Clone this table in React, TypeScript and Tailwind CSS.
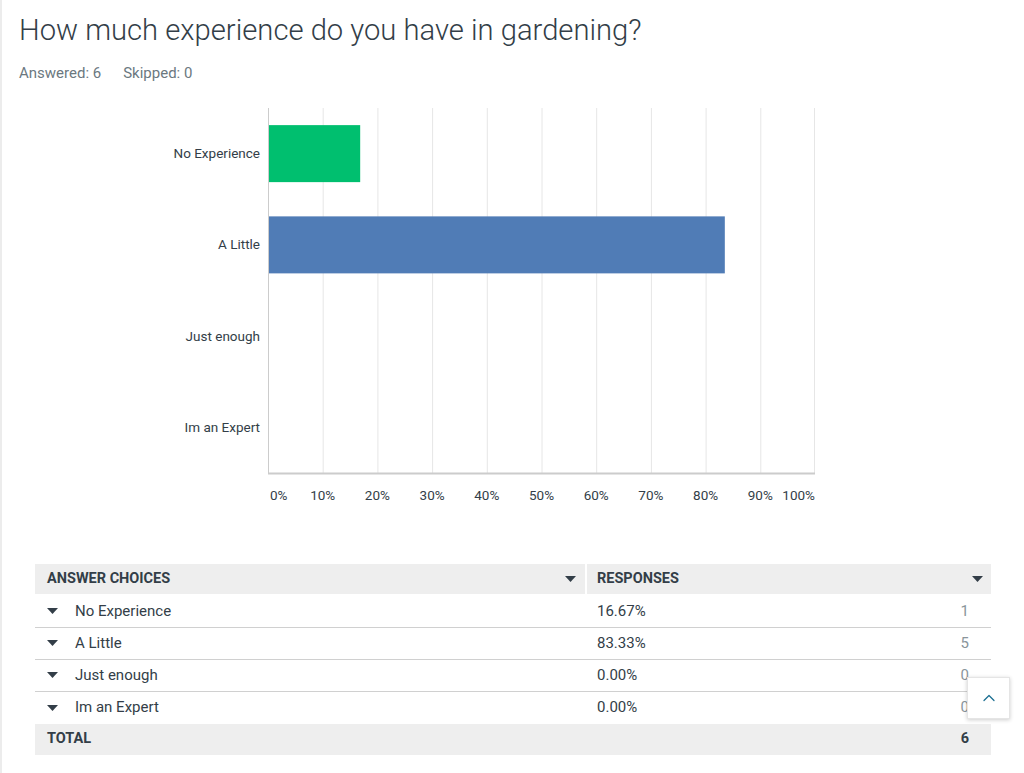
import { ChevronUp } from 'lucide-react';

const choices = [
  { label: 'No Experience', pct: 16.67, count: 1, color: '#00bf6f' },
  { label: 'A Little', pct: 83.33, count: 5, color: '#507cb6' },
  { label: 'Just enough', pct: 0, count: 0, color: '#6bc8cd' },
  { label: 'Im an Expert', pct: 0, count: 0, color: '#f9be00' },
];

const ticks = [0, 10, 20, 30, 40, 50, 60, 70, 80, 90, 100];

const PLOT_W = 547;
const PLOT_H = 365;
const ROW_H = PLOT_H / choices.length;
const BAR_H = 57;

function Caret({ className = '' }: { className?: string }) {
  return (
    <svg width="11" height="6" viewBox="0 0 11 6" className={className}>
      <path d="M0 0 L11 0 L5.5 6 Z" fill="currentColor" />
    </svg>
  );
}

function Chart() {
  return (
    <div className="flex">
      <div className="flex w-[266px] flex-col pr-2 pt-[108px]">
        {choices.map((c) => (
          <div key={c.label} className="flex h-[91.25px] items-center justify-end text-[13.5px] text-[#333e48]">
            {c.label}
          </div>
        ))}
      </div>
      <div className="flex flex-col pt-[108px]">
        <svg width={PLOT_W + 1} height={PLOT_H + 2} className="block">
          {ticks.map((t, i) => {
            const x = i === 10 ? PLOT_W - 0.5 : (t / 100) * PLOT_W + 0.5;
            return <line key={t} x1={x} y1={0} x2={x} y2={PLOT_H} stroke="#e6e6e6" strokeWidth={1} />;
          })}
          {choices.map((c, i) =>
            c.pct > 0 ? (
              <rect
                key={c.label}
                x={1}
                y={i * ROW_H + (ROW_H - BAR_H) / 2}
                width={(c.pct / 100) * PLOT_W}
                height={BAR_H}
                fill={c.color}
              />
            ) : null
          )}
          <line x1={0.5} y1={0} x2={0.5} y2={PLOT_H} stroke="#cccccc" strokeWidth={1} />
          <line x1={0} y1={PLOT_H + 0.5} x2={PLOT_W} y2={PLOT_H + 0.5} stroke="#cccccc" strokeWidth={2} />
        </svg>
        <div className="relative mt-[10px] h-[18px] w-[547px] text-[13.5px] text-[#333e48]">
          {ticks.map((t) => {
            const x = (t / 100) * PLOT_W;
            const cls =
              t === 0 ? 'absolute left-[2px] top-0' : t === 100 ? 'absolute right-0 top-0' : 'absolute top-0 -translate-x-1/2';
            return (
              <span key={t} className={cls} style={t !== 0 && t !== 100 ? { left: x } : undefined}>
                {t}%
              </span>
            );
          })}
        </div>
      </div>
    </div>
  );
}

function ResultsTable() {
  return (
    <div className="ml-[33px] mt-[61px] w-[956px] text-[15px] text-[#333e48]">
      <div className="flex h-[30px] bg-[#eeeeee] text-[14.5px] font-bold">
        <div className="flex w-[550px] items-center justify-between pl-3 pr-[9px]">
          <span>ANSWER CHOICES</span>
          <Caret className="text-[#333e48]" />
        </div>
        <div className="w-[2px] bg-white" />
        <div className="flex flex-1 items-center justify-between pl-[10px] pr-[8px]">
          <span>RESPONSES</span>
          <Caret className="text-[#333e48]" />
        </div>
      </div>
      <div className="mt-[2px]">
        {choices.map((c) => (
          <div key={c.label} className="flex h-[32px] items-center border-b border-[#d0d0d0] last:border-b-0">
            <div className="flex w-[552px] items-center">
              <Caret className="ml-3 mr-[17px] text-[#333e48]" />
              <span>{c.label}</span>
            </div>
            <div className="flex flex-1 items-center justify-between pl-[10px] pr-[22px]">
              <span>{c.pct.toFixed(2)}%</span>
              <span className="text-[#8a959b]">{c.count}</span>
            </div>
          </div>
        ))}
      </div>
      <div className="flex h-[31px] items-center justify-between bg-[#eeeeee] pl-3 pr-[22px] text-[14.5px] font-bold">
        <span>TOTAL</span>
        <span>6</span>
      </div>
    </div>
  );
}

export default function App() {
  return (
    <div
      className="relative min-h-[773px] w-[1024px] border-l-2 border-[#ececec] bg-white"
      style={{ fontFamily: 'Roboto, "Liberation Sans", sans-serif' }}
    >
      <div className="pl-[17px] pt-[10px]">
        <h1 className="text-[29.2px] font-light leading-[40px] text-[#333e48]">
          How much experience do you have in gardening?
        </h1>
        <div className="mt-[12px] flex gap-[22px] text-[15px] text-[#6b787f]">
          <span>Answered: 6</span>
          <span>Skipped: 0</span>
        </div>
      </div>
      <div className="-mt-[85px]">
        <Chart />
      </div>
      <ResultsTable />
      <button className="absolute left-[965px] top-[677px] flex h-[42px] w-[43px] items-center justify-center border border-[#e5e5e5] bg-white shadow-[0_1px_4px_rgba(0,0,0,0.2)]">
        <ChevronUp size={20} strokeWidth={1.5} className="text-[#1b6f92]" />
      </button>
    </div>
  );
}
